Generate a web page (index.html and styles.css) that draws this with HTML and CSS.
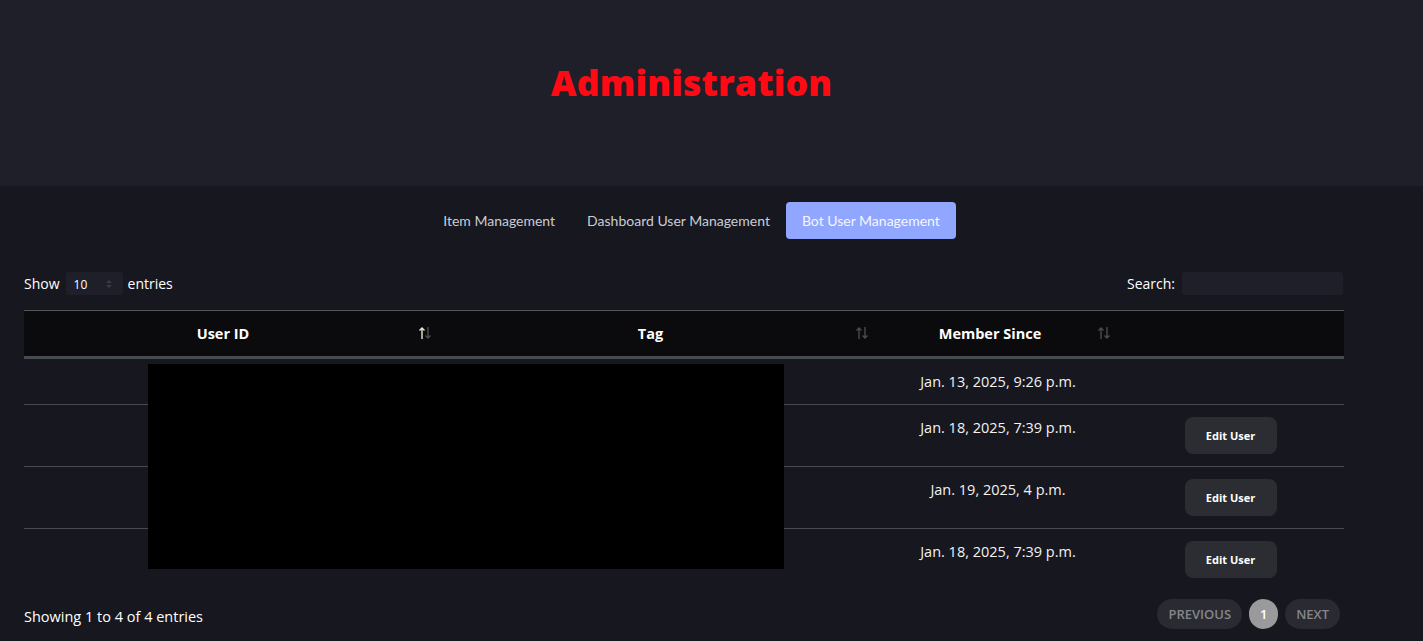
FILE: index.html
```html
<!DOCTYPE html>
<html lang="en">
<head>
<meta charset="utf-8">
<title>Administration</title>
<link rel="stylesheet" href="styles.css">
</head>
<body>
<header class="hero">
  <div class="hero-inner"><h1 class="hero-title">Administration</h1></div>
</header>
<main class="page">
  <nav class="tabs">
    <a class="tab">Item Management</a>
    <a class="tab">Dashboard User Management</a>
    <a class="tab tab-active">Bot User Management</a>
  </nav>
  <section class="dt">
    <div class="dt-top">
      <label class="dt-length">Show
        <span class="select"><span class="select-val">10</span>
          <svg class="select-caret" width="8" height="12" viewBox="0 0 8 12"><path d="M1 5 L4 2 L7 5 Z M1 7 L4 10 L7 7 Z" fill="#3a3b45"/></svg>
        </span>
        entries</label>
      <label class="dt-search">Search: <span class="search-input"></span></label>
    </div>
    <div class="table-wrap">
      <table class="grid">
        <colgroup>
          <col class="c1"><col class="c2"><col class="c3"><col class="c4">
        </colgroup>
        <thead>
          <tr>
            <th class="sortable">User ID
              <svg class="sort" width="14" height="14" viewBox="0 0 14 14"><path d="M4 13 V2 M1.5 4.5 L4 2 L6.5 4.5" stroke="#e8e4d0" stroke-width="1.4" fill="none"/><path d="M10 1 V12 M7.5 9.5 L10 12 L12.5 9.5" stroke="#4a4b52" stroke-width="1.4" fill="none"/></svg>
            </th>
            <th class="sortable">Tag
              <svg class="sort" width="14" height="14" viewBox="0 0 14 14"><path d="M4 13 V2 M1.5 4.5 L4 2 L6.5 4.5" stroke="#4a4b52" stroke-width="1.4" fill="none"/><path d="M10 1 V12 M7.5 9.5 L10 12 L12.5 9.5" stroke="#4a4b52" stroke-width="1.4" fill="none"/></svg>
            </th>
            <th class="sortable">Member Since
              <svg class="sort" width="14" height="14" viewBox="0 0 14 14"><path d="M4 13 V2 M1.5 4.5 L4 2 L6.5 4.5" stroke="#4a4b52" stroke-width="1.4" fill="none"/><path d="M10 1 V12 M7.5 9.5 L10 12 L12.5 9.5" stroke="#4a4b52" stroke-width="1.4" fill="none"/></svg>
            </th>
            <th></th>
          </tr>
        </thead>
        <tbody>
          <tr><td></td><td></td><td>Jan. 13, 2025, 9:26 p.m.</td><td></td></tr>
          <tr><td></td><td></td><td>Jan. 18, 2025, 7:39 p.m.</td><td><button class="edit-btn">Edit User</button></td></tr>
          <tr><td></td><td></td><td>Jan. 19, 2025, 4 p.m.</td><td><button class="edit-btn">Edit User</button></td></tr>
          <tr><td></td><td></td><td>Jan. 18, 2025, 7:39 p.m.</td><td><button class="edit-btn">Edit User</button></td></tr>
        </tbody>
      </table>
      <div class="redact"></div>
    </div>
    <div class="dt-bottom">
      <div class="dt-info">Showing 1 to 4 of 4 entries</div>
      <div class="pager">
        <span class="pg pg-dis">Previous</span>
        <span class="pg pg-cur">1</span>
        <span class="pg pg-dis">Next</span>
      </div>
    </div>
  </section>
</main>
</body>
</html>
```

FILE: styles.css
```css
html, body {
  margin: 0;
  padding: 0;
}
body {
  background: #17171f;
  color: #ffffff;
  font-family: "Open Sans", "DejaVu Sans", sans-serif;
  width: 1423px;
  height: 641px;
  overflow: hidden;
}
.hero {
  background: #1f1f29;
  height: 186px;
}
.hero-inner {
  width: 1383px;
  height: 164px;
  display: flex;
  align-items: center;
  justify-content: center;
}
.hero-title {
  margin: 0;
  color: #ff0a14;
  font-family: "Open Sans", sans-serif;
  font-weight: 800;
  font-size: 35.5px;
  letter-spacing: 0.2px;
}
.page {
  width: 1383px;
}
.tabs {
  display: flex;
  justify-content: center;
  padding-top: 16px;
}
.tab {
  font-family: Lato, sans-serif;
  font-size: 14px;
  line-height: 21px;
  padding: 8px 16px;
  color: #c9ccd6;
  border-radius: 4px;
}
.tab-active {
  background: #91a7ff;
  color: #f4f6ff;
}
.dt {
  margin-left: 24px;
  width: 1320px;
}
.dt-top {
  display: flex;
  justify-content: space-between;
  align-items: center;
  margin-top: 33px;
  height: 23px;
  font-size: 14px;
}
.dt-length {
  display: flex;
  align-items: center;
  gap: 5px;
}
.select {
  display: inline-flex;
  align-items: center;
  justify-content: space-between;
  width: 57px;
  height: 23px;
  box-sizing: border-box;
  padding: 0 10px 0 8px;
  margin-left: 1px;
  background: #1f1f29;
  border-radius: 3px;
  font-size: 12px;
}
.select-val {
  margin-top: 2px;
}
.dt-search {
  display: flex;
  align-items: center;
  gap: 7px;
  margin-right: 1px;
}
.search-input {
  display: block;
  width: 161px;
  height: 23px;
  background: #1f1f29;
  border-radius: 3px;
}
.table-wrap {
  position: relative;
  margin-top: 15px;
}
.grid {
  width: 1320px;
  border-collapse: collapse;
  table-layout: fixed;
}
.c1 { width: 418px; }
.c2 { width: 437px; }
.c3 { width: 242px; }
.c4 { width: 223px; }
.grid th {
  background: #0b0b0e;
  border-top: 1px solid #55565c;
  border-bottom: 3px solid #464b50;
  height: 47px;
  box-sizing: border-box;
  padding: 0 30px 0 10px;
  font-size: 14.5px;
  font-weight: 700;
  text-align: center;
  position: relative;
  color: #ffffff;
}
.grid th .sort {
  position: absolute;
  right: 10px;
  top: 15px;
}
.grid td {
  padding: 12px 10px;
  line-height: 21px;
  vertical-align: top;
  text-align: center;
  font-size: 14.5px;
  color: #f2f2f2;
  border-top: 1px solid #4a4a52;
}
.grid tbody tr:first-child td {
  border-top: none;
}
.grid td:nth-child(3) {
  padding-left: 8px;
  padding-right: 12px;
}
.grid td:nth-child(4) {
  padding-left: 8px;
  padding-right: 12px;
}
.edit-btn {
  display: block;
  margin: 0 auto;
  width: 92px;
  height: 37px;
  border: none;
  border-radius: 8px;
  background: #2c2d33;
  color: #ffffff;
  font-family: "Open Sans", sans-serif;
  font-weight: 700;
  font-size: 11px;
}
.redact {
  position: absolute;
  left: 124px;
  top: 54px;
  width: 636px;
  height: 205px;
  background: #000000;
}
.dt-bottom {
  display: flex;
  justify-content: space-between;
  align-items: center;
  padding-top: 9px;
}
.dt-info {
  font-size: 14.5px;
  margin-top: 5px;
}
.pager {
  display: flex;
  gap: 7px;
  margin-right: 4px;
}
.pg {
  height: 30px;
  line-height: 30px;
  border-radius: 15px;
  font-size: 13px;
  font-weight: 600;
  text-transform: uppercase;
  text-align: center;
}
.pg-dis {
  background: #2a2a32;
  color: #85858b;
  padding: 0 11px;
}
.pg-cur {
  width: 29px;
  background: #9a9a9c;
  color: #ffffff;
}
```
